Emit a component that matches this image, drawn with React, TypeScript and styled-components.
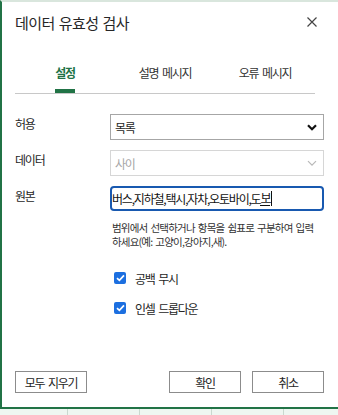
import React from 'react'
import styled, { createGlobalStyle } from 'styled-components'

const GlobalStyle = createGlobalStyle`
  html, body {
    margin: 0;
    padding: 0;
    background: #ffffff;
    overflow: hidden;
  }
  body {
    font-family: "Noto Sans CJK KR", "Noto Sans", sans-serif;
    color: #262626;
  }
`

const Page = styled.div`
  width: 338px;
  height: 415px;
  display: flex;
  flex-direction: column;
`

const Dialog = styled.div`
  box-sizing: border-box;
  height: 409px;
  border-top: 2px solid #d9e6dd;
  border-left: 2px solid #217346;
  border-bottom: 2px solid #217346;
  background: #ffffff;
  display: flex;
  flex-direction: column;
  padding: 0 14px 14px 13px;
`

const Header = styled.div`
  height: 40px;
  display: flex;
  align-items: center;
  justify-content: space-between;
  padding-right: 6px;
`

const Title = styled.div`
  font-size: 15px;
  letter-spacing: -0.5px;
  word-spacing: 1px;
  color: #262626;
`

const CloseButton = styled.button`
  border: none;
  background: none;
  padding: 0;
  width: 12px;
  height: 12px;
  display: flex;
  align-items: center;
  justify-content: center;
  color: #444;
`

const Tabs = styled.div`
  margin-top: 15px;
  width: 300px;
  display: flex;
  border-bottom: 1px solid #c8c8c8;
`

const Tab = styled.div`
  flex: 1;
  height: 36px;
  display: flex;
  flex-direction: column;
  align-items: center;
  justify-content: flex-end;
`

const TabLabel = styled.span<{ $active?: boolean }>`
  font-size: 12px;
  letter-spacing: -1.3px;
  word-spacing: 2.5px;
  line-height: 18px;
  padding-bottom: 7px;
  color: ${p => (p.$active ? '#217346' : '#333333')};
  font-weight: ${p => (p.$active ? 700 : 400)};
  border-bottom: 4px solid ${p => (p.$active ? '#217346' : 'transparent')};
`

const Form = styled.div`
  margin-top: 20px;
  display: flex;
  flex-direction: column;
  gap: 10px;
`

const Row = styled.div`
  display: grid;
  grid-template-columns: 95px 214px;
  align-items: center;
`

const Label = styled.div`
  font-size: 12px;
  letter-spacing: -1.2px;
  color: #262626;
  align-self: start;
  line-height: 20px;
`

const SelectBox = styled.div<{ $disabled?: boolean }>`
  box-sizing: border-box;
  height: 26px;
  border: 1px solid ${p => (p.$disabled ? '#d6d6d6' : '#a6a6a6')};
  display: flex;
  align-items: center;
  justify-content: space-between;
  padding: 0 6px 0 4px;
  font-size: 12px;
  letter-spacing: -1.2px;
  color: ${p => (p.$disabled ? '#a6a6a6' : '#262626')};
`

const SourceInput = styled.div`
  box-sizing: border-box;
  height: 25px;
  border: 2px solid #1859b0;
  border-radius: 4px;
  display: flex;
  align-items: center;
  font-size: 12px;
  letter-spacing: -1.2px;
  color: #111;
  white-space: nowrap;
  overflow: hidden;
`

const Composing = styled.span`
  border-bottom: 1.5px solid #111;
  line-height: 14px;
`

const Caret = styled.span`
  display: inline-block;
  width: 1px;
  height: 15px;
  background: #111;
  margin-left: 1px;
`

const Help = styled.div`
  margin: 10px 0 0 97px;
  font-size: 10.5px;
  letter-spacing: -0.8px;
  word-spacing: 1.5px;
  line-height: 14px;
  color: #333333;
`

const Checks = styled.div`
  margin: 19px 0 0 99px;
  display: flex;
  flex-direction: column;
  gap: 10px;
`

const CheckRow = styled.label`
  height: 20px;
  display: flex;
  align-items: center;
  gap: 9px;
  font-size: 12px;
  letter-spacing: -1.3px;
  word-spacing: 2.5px;
  color: #262626;
`

const CheckBox = styled.span`
  width: 12px;
  height: 12px;
  border-radius: 2px;
  background: #1c6fe0;
  display: flex;
  align-items: center;
  justify-content: center;
`

const Footer = styled.div`
  margin-top: auto;
  display: flex;
  align-items: center;
  justify-content: space-between;
`

const ButtonGroup = styled.div`
  display: flex;
  gap: 11px;
`

const Button = styled.button`
  box-sizing: border-box;
  width: 72px;
  height: 22px;
  border: 1px solid #8c8c8c;
  background: #ffffff;
  font-family: "Noto Sans CJK KR", "Noto Sans", sans-serif;
  font-size: 12px;
  letter-spacing: -1.3px;
  word-spacing: 2.5px;
  color: #262626;
  padding: 0;
`

const Sheet = styled.div`
  flex: 1;
  display: grid;
  grid-template-columns: 68px 72px 72px 72px 1fr;
  background: #eef6f1;
`

const Cell = styled.div`
  border-right: 1px solid #c9d9cf;
  &:last-child {
    border-right: none;
  }
`

const Chevron = ({ disabled }: { disabled?: boolean }) => (
  <svg width="10" height="7" viewBox="0 0 10 7">
    <path
      d="M1 1.2 L5 5.2 L9 1.2"
      fill="none"
      stroke={disabled ? '#b8b8b8' : '#111'}
      strokeWidth={disabled ? 1.2 : 2.2}
    />
  </svg>
)

const Check = () => (
  <svg width="9" height="8" viewBox="0 0 9 8">
    <path d="M1 4.2 L3.4 6.4 L8 1.4" fill="none" stroke="#fff" strokeWidth="1.7" />
  </svg>
)

export default function App() {
  return (
    <Page>
      <GlobalStyle />
      <Dialog>
        <Header>
          <Title>데이터 유효성 검사</Title>
          <CloseButton aria-label="닫기">
            <svg width="10" height="10" viewBox="0 0 10 10">
              <path d="M0.5 0.5 L9.5 9.5 M9.5 0.5 L0.5 9.5" stroke="#444" strokeWidth="1.2" />
            </svg>
          </CloseButton>
        </Header>

        <Tabs>
          <Tab><TabLabel $active>설정</TabLabel></Tab>
          <Tab><TabLabel>설명 메시지</TabLabel></Tab>
          <Tab><TabLabel>오류 메시지</TabLabel></Tab>
        </Tabs>

        <Form>
          <Row>
            <Label>허용</Label>
            <SelectBox>
              <span>목록</span>
              <Chevron />
            </SelectBox>
          </Row>
          <Row>
            <Label>데이터</Label>
            <SelectBox $disabled>
              <span>사이</span>
              <Chevron disabled />
            </SelectBox>
          </Row>
          <Row>
            <Label>원본</Label>
            <SourceInput>
              버스,지하철,택시,자차,오토바이,도<Composing>보</Composing>
              <Caret />
            </SourceInput>
          </Row>
        </Form>

        <Help>
          범위에서 선택하거나 항목을 쉼표로 구분하여 입력
          <br />
          하세요(예: 고양이,강아지,새).
        </Help>

        <Checks>
          <CheckRow>
            <CheckBox><Check /></CheckBox>
            공백 무시
          </CheckRow>
          <CheckRow>
            <CheckBox><Check /></CheckBox>
            인셀 드롭다운
          </CheckRow>
        </Checks>

        <Footer>
          <Button>모두 지우기</Button>
          <ButtonGroup>
            <Button>확인</Button>
            <Button>취소</Button>
          </ButtonGroup>
        </Footer>
      </Dialog>
      <Sheet>
        <Cell />
        <Cell />
        <Cell />
        <Cell />
        <Cell />
      </Sheet>
    </Page>
  )
}
